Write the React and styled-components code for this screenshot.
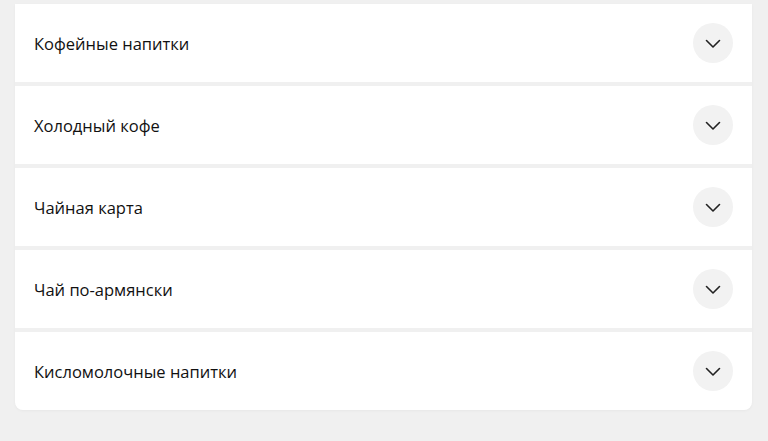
import React from "react";
import styled, { createGlobalStyle } from "styled-components";

const categories = [
    "Кофейные напитки",
    "Холодный кофе",
    "Чайная карта",
    "Чай по-армянски",
    "Кисломолочные напитки",
];

const App = () => {
    return (
        <>
            <GlobalStyle />
            <Page>
                <Card>
                    {categories.map((title) => (
                        <Row key={title}>
                            <Title>{title}</Title>
                            <Toggle aria-label="Развернуть">
                                <svg width="16" height="10" viewBox="0 0 16 10" fill="none">
                                    <path
                                        d="M1.5 1.5L8 8L14.5 1.5"
                                        stroke="#222"
                                        strokeWidth="1.6"
                                        strokeLinecap="round"
                                        strokeLinejoin="round"
                                    />
                                </svg>
                            </Toggle>
                        </Row>
                    ))}
                </Card>
            </Page>
        </>
    );
};

export default App;

const GlobalStyle = createGlobalStyle`
    body {
        margin: 0;
        background: #f0f0f0;
        font-family: "Open Sans", "Noto Sans", sans-serif;
    }
`;

const Page = styled.div`
    padding: 4px 16px 30px 15px;
`;

const Card = styled.div`
    background: #f0f0f0;
    border-radius: 0 0 8px 8px;
    overflow: hidden;
    display: flex;
    flex-direction: column;
    gap: 4px;
    box-shadow: 0 1px 3px rgba(0, 0, 0, 0.04);
`;

const Row = styled.div`
    display: flex;
    align-items: center;
    justify-content: space-between;
    height: 78px;
    padding: 0 19px 0 19px;
    background: #fff;
`;

const Title = styled.span`
    font-size: 16.5px;
    color: #111;
`;

const Toggle = styled.button`
    display: flex;
    align-items: center;
    justify-content: center;
    width: 40px;
    height: 40px;
    border: none;
    border-radius: 50%;
    background: #f2f2f2;
    padding: 0;
    padding-top: 2px;
    cursor: pointer;
`;
